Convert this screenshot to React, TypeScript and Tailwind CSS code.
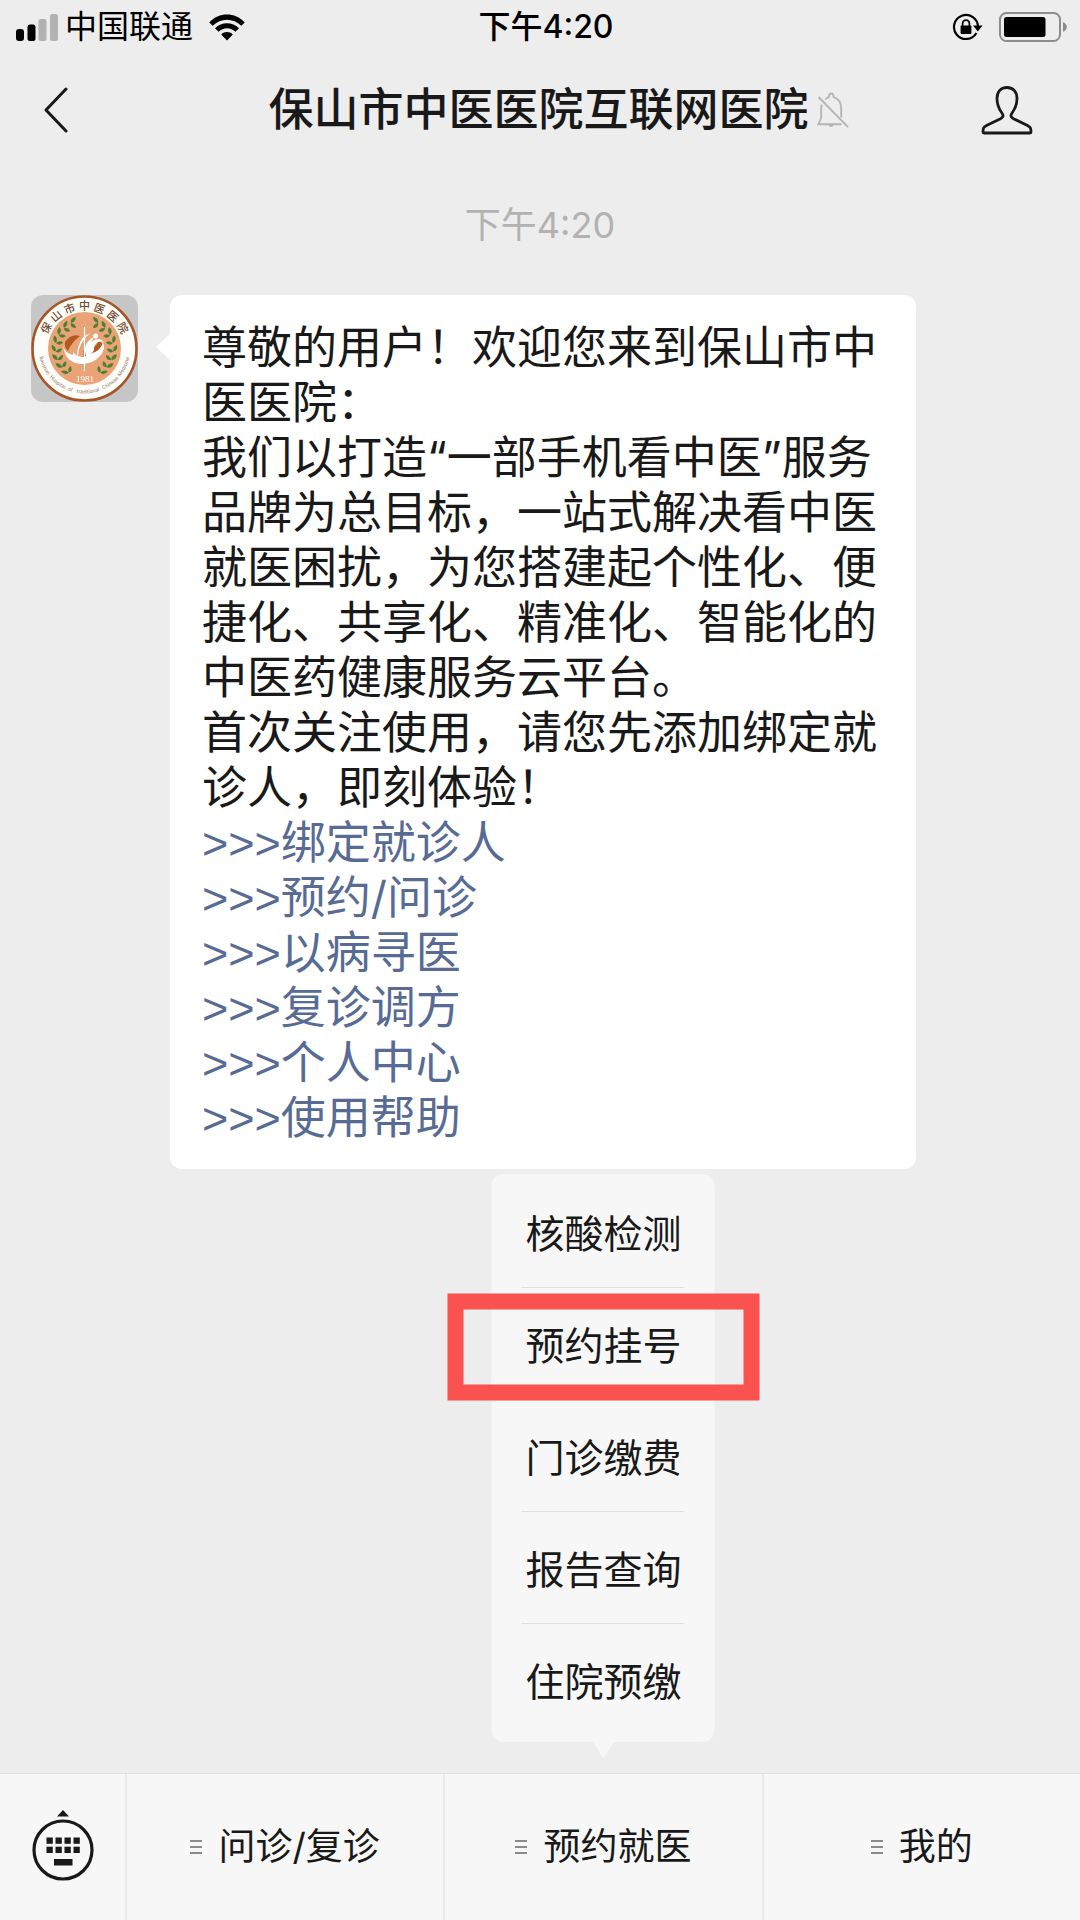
import React from "react";

const greeting = [
  "尊敬的用户！欢迎您来到保山市中医医院：",
  "我们以打造“一部手机看中医”服务品牌为总目标，一站式解决看中医就医困扰，为您搭建起个性化、便捷化、共享化、精准化、智能化的中医药健康服务云平台。",
  "首次关注使用，请您先添加绑定就诊人，即刻体验！",
];

const links = ["绑定就诊人", "预约/问诊", "以病寻医", "复诊调方", "个人中心", "使用帮助"];

const menuItems = ["核酸检测", "预约挂号", "门诊缴费", "报告查询", "住院预缴"];

function SignalIcon() {
  return (
    <svg width="43" height="27" viewBox="0 0 43 27" aria-hidden="true">
      <rect x="0" y="15" width="8" height="12" rx="3" fill="#000" />
      <rect x="11.5" y="10.5" width="8" height="16.5" rx="2.5" fill="#000" />
      <rect x="22.5" y="5" width="8" height="22" rx="2.5" fill="#b2b2b2" />
      <rect x="34" y="0" width="8" height="27" rx="2.5" fill="#b2b2b2" />
    </svg>
  );
}

function WifiIcon() {
  return (
    <svg width="36" height="27" viewBox="0 0 36 27" aria-hidden="true">
      <path d="M0.3 8.4C10 -2 26 -2 35.7 8.4L32.3 11.8C24.4 3.6 11.6 3.6 3.7 11.8Z" fill="#000" />
      <path d="M6 14.2C12.7 7.5 23.3 7.5 30 14.2L26.4 17.7C21.7 13 14.3 13 9.6 17.7Z" fill="#000" />
      <path d="M12.2 20.4C15.4 17.3 20.6 17.3 23.8 20.4L18 26.6Z" fill="#000" />
    </svg>
  );
}

function RotationLockIcon() {
  return (
    <svg width="31" height="28" viewBox="0 0 31 28" aria-hidden="true">
      <path d="M24.4 20A12 12 0 1 1 26 14" fill="none" stroke="#000" strokeWidth="2.2" />
      <path d="M21 12.6H30.6L25.8 18.6Z" fill="#000" />
      <rect x="8.6" y="12.6" width="10.8" height="8.4" rx="1" fill="#000" />
      <path d="M10.6 13V10.6a3.4 3.4 0 0 1 6.8 0V13" fill="none" stroke="#000" strokeWidth="1.7" />
    </svg>
  );
}

function BatteryIcon() {
  return (
    <svg width="69" height="30" viewBox="0 0 69 30" aria-hidden="true">
      <rect x="1" y="1" width="60" height="28" rx="6.5" fill="none" stroke="#8c8c8c" strokeWidth="2" />
      <rect x="5" y="5" width="41.500" height="20" rx="2.500" fill="#000" />
      <path d="M64 10Q67.800 12 67.800 15Q67.800 18 64 20Z" fill="#8c8c8c" />
    </svg>
  );
}

function MutedBellIcon() {
  return (
    <svg width="32" height="36" viewBox="0 0 32 36" fill="none" stroke="#b5b5b5" strokeWidth="1.9" aria-hidden="true">
      <path d="M8.500 7.500Q10 5.600 12 4.800Q12.200 1.500 14.200 1.500Q16.300 1.500 16.500 4.800Q24.400 7.500 24.200 17V25.500" />
      <path d="M4.600 12.500Q4 15 4.200 25Q4 27.500 1.300 32.200H24.500" />
      <path d="M1.500 5L31 35.200" />
      <path d="M11.500 33a2.800 2.800 0 0 0 5.400 0" fill="#b5b5b5" stroke="none" />
    </svg>
  );
}

function PersonIcon() {
  return (
    <svg width="52" height="50" viewBox="0 0 52 50" fill="none" stroke="#191919" strokeWidth="2.800" strokeLinejoin="round" aria-hidden="true">
      <path d="M26 2.500C19.500 2.500 16 7 16 13.500C16 20.500 18.400 24.500 20.600 27.500C22.600 30.200 22.800 32 19.500 33.700L5.500 40.500C2.500 42 2 43.200 2 47Q2 48 3 48H49Q50 48 50 47C50 43.200 49.500 42 46.500 40.500L32.500 33.700C29.200 32 29.400 30.200 31.400 27.500C33.600 24.500 36 20.500 36 13.500C36 7 32.500 2.500 26 2.500Z" />
    </svg>
  );
}

function KeyboardIcon() {
  return (
    <svg width="62" height="71" viewBox="0 0 62 71" fill="#191919" aria-hidden="true">
      <path d="M31 0L37 6.500H25Z" />
      <circle cx="31" cy="40" r="29" fill="none" stroke="#191919" strokeWidth="3.200" />
      {[0, 1, 2, 3].map((i) => (
        <g key={i}>
          <rect x={14.5 + i * 9} y="27.500" width="6.300" height="6.300" />
          <rect x={14.5 + i * 9} y="36.700" width="6.300" height="6.300" />
        </g>
      ))}
      <rect x="22" y="49" width="18.500" height="6.500" />
    </svg>
  );
}

function ListIcon() {
  return (
    <svg width="12" height="15" viewBox="0 0 12 15" fill="#8a8a8a" aria-hidden="true">
      <rect y="0" width="12" height="2" />
      <rect y="6" width="12" height="2" />
      <rect y="12" width="12" height="2" />
    </svg>
  );
}

const leaves = [0, 1, 2, 3, 4, 5, 6, 7];

const englishName = [
  { word: "Baoshan", offset: "8%" },
  { word: "Hospital", offset: "26%" },
  { word: "of", offset: "38%" },
  { word: "traditional", offset: "53%" },
  { word: "Chinese", offset: "73%" },
  { word: "Medicine", offset: "91%" },
];

function HospitalLogo() {
  const branch = leaves.map((i) => {
    const angle = ((118 + i * 17) * Math.PI) / 180;
    const x = 53.5 + 29 * Math.cos(angle);
    const y = 53.5 - 29 * Math.sin(angle);
    const turn = -i * 17;
    return (
      <g key={i} transform={`translate(${x} ${y}) rotate(${turn})`} fill="#4c8130">
        <path d="M0 0Q-1 -5 5 -6Q5 -1 0 0Z" />
        <path d="M0 0Q-1 5 5 5Q5 1 0 0Z" />
      </g>
    );
  });
  return (
    <svg width="107" height="107" viewBox="0 0 107 107" role="img" aria-label="保山市中医医院">
      <circle cx="53.5" cy="53.5" r="52" fill="#fffdf8" stroke="#a4562a" strokeWidth="2.600" />
      <circle cx="53.5" cy="53.5" r="36.500" fill="#e9a377" />
      <defs>
        <path id="logo-arc-top" d="M14.500 46A40 40 0 0 1 92.500 46" />
        <path id="logo-arc-bottom" d="M8.500 62A46 46 0 0 0 98.500 62" />
      </defs>
      <text fontSize="11" fontWeight="500" fill="#6d4a33" textAnchor="middle">
        <textPath href="#logo-arc-top" startOffset="50%">保 山 市 中 医 医 院</textPath>
      </text>
      {englishName.map(({ word, offset }) => (
        <text key={word} fontSize="5" fill="#8c7a6c" textAnchor="middle">
          <textPath href="#logo-arc-bottom" startOffset={offset}>{word}</textPath>
        </text>
      ))}
      {branch}
      <g transform="translate(107 0) scale(-1 1)">{branch}</g>
      <path d="M34 47Q40 38 49 41Q40 48 37 56Q33 52 34 47Z" fill="#b25a21" />
      <path d="M52 56Q62 57 68 46Q74 49 70 57Q64 69 50 68Q54 62 52 56Z" fill="#b25a21" />
      <path d="M32 50Q33 58 42 60Q43 46 59 38Q47 49 47 61Q53 63 55 61Q51 48 63 42Q57 51 59 59Q70 56 72 47Q75 54 69 61Q62 69 50 69Q34 68 32 50Z" fill="#fff" />
      <path d="M42 57Q44 47 53 41Q46 50 46 61Z" fill="#e9a377" />
      <path d="M60 47Q68 41 73 47Q66 45 63 52Q64 58 56 61Q55 52 60 47Z" fill="#fff" />
      <circle cx="64.500" cy="41" r="2.500" fill="#fff" />
      <path d="M53.500 32V76" stroke="#fff" strokeWidth="1.200" />
      <text x="54" y="87" fontSize="9" fontFamily="Liberation Serif, serif" fill="#fff" textAnchor="middle">1981</text>
    </svg>
  );
}

function TabButton({ label, expanded }: { label: string; expanded?: boolean }) {
  return (
    <button
      type="button"
      aria-expanded={expanded ? true : false}
      className="flex h-full w-full items-center justify-center gap-4 text-[37px] leading-[52px]"
    >
      <ListIcon />
      {label}
    </button>
  );
}

function PopupMenu() {
  return (
    <div className="absolute bottom-full left-1/2 mb-8 w-[223px] -translate-x-1/2 rounded-xl bg-[#f7f7f7] px-[30px] pt-[2px] pb-[7px]">
      <ul>
        {menuItems.map((item, i) => (
          <li key={item} className="relative">
            {i > 0 && <div className="h-px bg-[#e0e0e0]" />}
            <button type="button" className="flex h-[111px] w-full items-center justify-center pt-1 text-[39px] leading-[56px] whitespace-nowrap">
              {item}
            </button>
            {item === "预约挂号" && (
              <div className="pointer-events-none absolute top-1/2 left-1/2 z-10 mt-1 h-[107px] w-[312px] -translate-x-1/2 -translate-y-1/2 border-[16px] border-[#fa5151]" />
            )}
          </li>
        ))}
      </ul>
      <svg className="absolute top-full left-1/2 -translate-x-1/2" width="20" height="16" viewBox="0 0 20 16" aria-hidden="true">
        <path d="M0 0H20L11.500 14.500Q10 16 8.500 14.500Z" fill="#f7f7f7" />
      </svg>
    </div>
  );
}

export default function App() {
  return (
    <div className="flex min-h-screen flex-col bg-[#ededed] font-['Inter','Noto_Sans_CJK_SC',sans-serif] text-[#191919]">
      <header>
        <div className="grid h-[54px] grid-cols-3 items-center pr-3 pl-4 text-black">
          <div className="flex items-center">
            <SignalIcon />
            <span className="ml-[6px] text-[32px] leading-[48px]">中国联通</span>
            <span className="ml-4">
              <WifiIcon />
            </span>
          </div>
          <div className="pl-2 text-center text-[32px] leading-[48px] font-medium">下午4:20</div>
          <div className="flex items-center justify-end gap-4">
            <RotationLockIcon />
            <BatteryIcon />
          </div>
        </div>
        <div className="flex h-[112px] items-center justify-between pr-[47px] pl-11">
          <button type="button" aria-label="返回">
            <svg width="52" height="46" viewBox="0 0 52 46" fill="none" stroke="#191919" strokeWidth="3" strokeLinecap="round" strokeLinejoin="round" aria-hidden="true">
              <path d="M22 2L2 23L22 44" />
            </svg>
          </button>
          <h1 className="relative text-[45px] leading-[64px] font-medium">
            保山市中医医院互联网医院
            <span className="absolute top-1/2 left-full ml-2 -translate-y-1/2">
              <MutedBellIcon />
            </span>
          </h1>
          <button type="button" aria-label="公众号资料">
            <PersonIcon />
          </button>
        </div>
      </header>

      <main className="flex-1 pt-8">
        <time className="block text-center text-[36px] leading-[54px] text-[#b2b2b2]">下午4:20</time>
        <div className="mt-[43px] flex items-start gap-8 pr-40 pl-[31px]">
          <div className="shrink-0 overflow-hidden rounded-xl bg-[#c6c6c6]">
            <HospitalLogo />
          </div>
          <div className="relative w-[746px] rounded-xl bg-white pt-[25px] pr-7 pb-6 pl-8 text-[45px] leading-[55px]">
            <svg className="absolute top-9 right-full" width="14" height="32" viewBox="0 0 14 32" aria-hidden="true">
              <path d="M14 3L1.500 14.500Q0 16 1.500 17.500L14 29Z" fill="#fff" />
            </svg>
            {greeting.map((line) => (
              <p key={line}>{line}</p>
            ))}
            {links.map((label) => (
              <a key={label} href="#" className="block text-[#576b95]">
                <span className="font-['Liberation_Sans',sans-serif] leading-none">&gt;&gt;&gt;</span>
                {label}
              </a>
            ))}
          </div>
        </div>
      </main>

      <footer className="flex h-[147px] divide-x-2 divide-[#ebebeb] border-t border-[#e0e0e0] bg-[#f7f7f7]">
        <button type="button" aria-label="键盘" className="flex w-[127px] shrink-0 items-center justify-center pb-1">
          <KeyboardIcon />
        </button>
        <div className="flex-1">
          <TabButton label="问诊/复诊" />
        </div>
        <div className="relative flex-1">
          <TabButton label="预约就医" expanded />
          <PopupMenu />
        </div>
        <div className="flex-1">
          <TabButton label="我的" />
        </div>
      </footer>
    </div>
  );
}
